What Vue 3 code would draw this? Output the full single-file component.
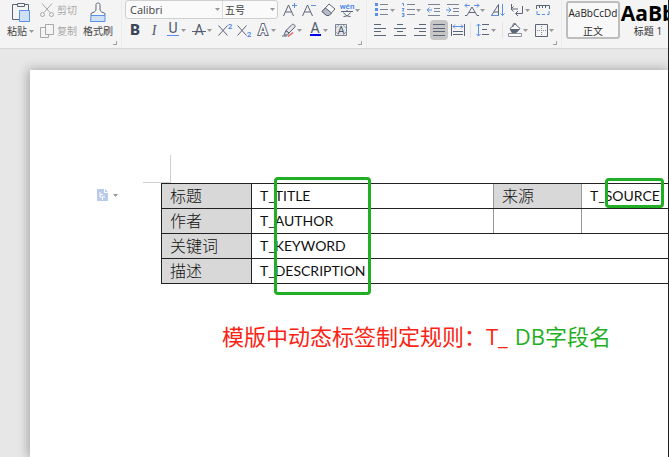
<template>
  <div class="writer">
    <svg class="sprite" aria-hidden="true">
      <symbol id="paste" viewBox="0 0 20 20">
        <path d="M6 2.5H1.5v15H8M14 2.5h3.5V8" fill="none" stroke="#5b6579" />
        <path d="M6.5 4.5v-3h7v3z" fill="#f4f4f4" stroke="#5b6579" />
        <path d="M8.5 8.5h10v11h-10z" fill="#cfe0fb" stroke="#5a8fe8" />
      </symbol>
      <symbol id="brush" viewBox="0 0 20 20">
        <path d="M8 7V2.500c0-2 4-2 4 0V7c0 2 1 3 3 3.500l2 1v2H3v-2l2-1C7 10 8 9 8 7z" fill="#f8f8f8" stroke="#5b6579" />
        <path d="M3 13.5h14v6H2.5z" fill="#cfe0fb" stroke="#5a8fe8" />
      </symbol>
      <symbol id="cut" viewBox="0 0 16 16">
        <g fill="none" stroke="#a8a8a8">
          <path d="M3 1.5l8 9M13 1.5l-8 9" />
          <circle cx="3.5" cy="12.5" r="2" />
          <circle cx="12.5" cy="12.5" r="2" />
        </g>
      </symbol>
      <symbol id="copy" viewBox="0 0 16 16">
        <path d="M6.5 1.5h8v10h-8zM6.5 4.5h-5v10h8v-3" fill="none" stroke="#a8a8a8" />
      </symbol>
      <symbol id="grow" viewBox="0 0 16 16">
        <path d="M1.5 14L6.5 3l5 11M3.5 10h6" fill="none" stroke="#5b6579" />
        <path d="M10 3.5h5M12.5 1v5" stroke="#5a8fe8" />
      </symbol>
      <symbol id="shrink" viewBox="0 0 16 16">
        <path d="M1.5 14L6.5 3l5 11M3.5 10h6" fill="none" stroke="#5b6579" />
        <path d="M10 3.5h5" stroke="#5a8fe8" />
      </symbol>
      <symbol id="eraser" viewBox="0 0 16 16">
        <path d="M9 2l6 5-6 6.500H6.500L2 9.500z" fill="#f8f8f8" stroke="#5b6579" />
        <path d="M5.500 6l6 5L9 13.500H6.500L2 9.500z" fill="#b5bac4" stroke="#5b6579" />
      </symbol>
      <symbol id="pinyin" viewBox="0 0 16 16">
        <path d="M2 9.5h12M8 8v1.500M4.500 10.500c2 3 4 4 7 4M11.500 10.500c-2 3-4 4-7 4" fill="none" stroke="#5b6579" />
      </symbol>
      <symbol id="underline" viewBox="0 0 16 16">
        <path d="M2 13.5h12" stroke="#5a8fe8" />
      </symbol>
      <symbol id="strike" viewBox="0 0 16 16">
        <path d="M1 9.5h14" stroke="#5b6579" />
      </symbol>
      <symbol id="cross" viewBox="0 0 16 16">
        <path d="M1.5 3.5l9 10M10.5 3.5l-9 10" stroke="#5b6579" />
      </symbol>
      <symbol id="marker" viewBox="0 0 16 16">
        <path d="M5 8.500l6-6c1-1 4 1 3 2.500l-6 6zM5 8.500l3 2.500-1.500 2H3z" fill="#e2e4e8" stroke="#5b6579" />
        <path d="M1 14h5" stroke="#5b6579" />
        <path d="M7 14.500l5-4" stroke="#e8604c" stroke-width="1.5" />
      </symbol>
      <symbol id="color" viewBox="0 0 16 16">
        <path d="M3 12h11v2H3z" fill="#0000f0" />
      </symbol>
      <symbol id="shade" viewBox="0 0 16 16">
        <path d="M2.5 2.5h11v11h-11z" fill="#e4e6ea" stroke="#7b8494" />
        <path d="M3 6l3-3M10 3l3 3M3 10l3 3M13 10l-3 3" stroke="#a4abb6" />
      </symbol>
      <symbol id="bullets" viewBox="0 0 16 16">
        <path d="M6 2.5h8M6 7.5h8M6 12.5h8" stroke="#7b8494" />
        <path d="M1 1h3v3H1zM1 6h3v3H1zM1 11h3v3H1z" fill="#5a8fe8" />
      </symbol>
      <symbol id="numbers" viewBox="0 0 16 16">
        <path d="M7 2.5h8M7 7.5h8M7 12.5h8" stroke="#7b8494" />
        <path d="M2 1.500h1.500V4M2 6.500h2L2.500 9H4M2 11.500h2v3H2M2.500 13H4" fill="none" stroke="#5a8fe8" />
      </symbol>
      <symbol id="outdent" viewBox="0 0 16 16">
        <path d="M2 2.5h12M8 6.5h6M8 9.5h6M2 13.5h12" stroke="#7b8494" />
        <path d="M6 8H1M3.500 5.500L1 8l2.500 2.500" fill="none" stroke="#5a8fe8" />
      </symbol>
      <symbol id="indent" viewBox="0 0 16 16">
        <path d="M2 2.5h12M8 6.5h6M8 9.5h6M2 13.5h12" stroke="#7b8494" />
        <path d="M1 8h5M3.500 5.500L6 8l-2.500 2.500" fill="none" stroke="#5a8fe8" />
      </symbol>
      <symbol id="textdir" viewBox="0 0 16 16">
        <path d="M1 13.500h2L8 5l5 8.500h2M5 10.500h6" fill="none" stroke="#5b6579" />
        <path d="M6 3.500H1M3 1.500l-2 2 2 2M10 3.500h5M13 1.500l2 2-2 2" fill="none" stroke="#5a8fe8" />
      </symbol>
      <symbol id="sort" viewBox="0 0 16 16">
        <path d="M1.500 13.500L8.500 2.500v11zM4 10h4" fill="none" stroke="#5b6579" />
        <path d="M2 13.500h7M12.500 2v11.500M10.500 11.500l2 2 2-2" fill="none" stroke="#5a8fe8" />
      </symbol>
      <symbol id="enter" viewBox="0 0 16 16">
        <path d="M2.500 2v5H9M4.500 4.500L2 7l2.500 2.500M13.500 4v7.500H7M9 9l-2.500 2.500L9 14" fill="none" stroke="#5b6579" />
      </symbol>
      <symbol id="tabs" viewBox="0 0 16 16">
        <path d="M1.500 7V3.500h13V7M4.500 4v2M7.500 4v2M10.500 4v2" fill="none" stroke="#5b6579" />
        <path d="M2 9v3.500h3M7 12.500h3M14 9v3.500h-2" fill="none" stroke="#5a8fe8" />
      </symbol>
      <symbol id="left" viewBox="0 0 16 16">
        <path d="M0 2.5h7M0 6.5h12M0 9.5h7M0 13.5h12" stroke="#5b6579" />
      </symbol>
      <symbol id="center" viewBox="0 0 16 16">
        <path d="M4 2.5h6M1 6.5h12M4 9.5h6M1 13.5h12" stroke="#5b6579" />
      </symbol>
      <symbol id="right" viewBox="0 0 16 16">
        <path d="M7 2.5h7M2 6.5h12M7 9.5h7M2 13.5h12" stroke="#5b6579" />
      </symbol>
      <symbol id="justify" viewBox="0 0 16 16">
        <path d="M2 2.5h12M2 6.5h12M2 9.5h12M2 13.5h12" stroke="#5b6579" />
      </symbol>
      <symbol id="distribute" viewBox="0 0 16 16">
        <path d="M1.5 2v12M14.5 2v12M3 9.5h10M3 12.5h10" stroke="#5b6579" />
        <path d="M3 4.500h10M5 2.500l-2 2 2 2M11 2.500l2 2-2 2" fill="none" stroke="#5a8fe8" />
      </symbol>
      <symbol id="spacing" viewBox="0 0 16 16">
        <path d="M7 2.5h7M7 7.5h5M7 12.5h7" stroke="#5b6579" />
        <path d="M3.500 2v12M1.500 4l2-2 2 2M1.500 12l2 2 2-2" fill="none" stroke="#5a8fe8" />
      </symbol>
      <symbol id="bucket" viewBox="0 0 16 16">
        <path d="M3 6.500l5-4.500 5 4.500-4 4H5zM6 5V2.500c0-1.500 3-1.500 3 0" fill="#f8f8f8" stroke="#5b6579" />
        <path d="M3 7h10l-4 4H5z" fill="#5b6579" />
        <path d="M1.5 11.5h13v3h-13z" fill="#fff" stroke="#8a8f99" />
      </symbol>
      <symbol id="borders" viewBox="0 0 16 16">
        <path d="M2.5 2.5h12v12h-12z" fill="none" stroke="#5b6579" />
        <path d="M8.5 4v10M4 8.5h10" stroke="#8a8f99" stroke-dasharray="1 1" />
      </symbol>
      <symbol id="caret" viewBox="0 0 5 3">
        <path d="M0 0h5L2.5 3z" fill="#999" />
      </symbol>
      <symbol id="file" viewBox="0 0 12 12">
        <path d="M0 0h8l3 3v9H0z" fill="#b9cbea" />
        <path d="M7.500 0v3.500H11M3 3v5h5M3 5.500h3M5.500 8v3" fill="none" stroke="#fff" />
      </symbol>
    </svg>

    <header class="ribbon">
      <section class="group clipboard" aria-label="剪贴板">
        <button class="big">
          <svg><use href="#paste" /></svg>
          <span>粘贴<svg class="caret"><use href="#caret" /></svg></span>
        </button>
        <div class="stack">
          <button class="inline" disabled><svg><use href="#cut" /></svg>剪切</button>
          <button class="inline" disabled><svg><use href="#copy" /></svg>复制</button>
        </div>
        <button class="big">
          <svg><use href="#brush" /></svg>
          <span>格式刷</span>
        </button>
        <i class="corner"></i>
      </section>

      <section class="group font" aria-label="字体">
        <div class="row">
          <div class="combo">
            <label class="family">
              <select aria-label="字体名称"><option>Calibri</option></select>
              <svg class="caret"><use href="#caret" /></svg>
            </label>
            <label class="size">
              <select aria-label="字号"><option>五号</option></select>
              <svg class="caret"><use href="#caret" /></svg>
            </label>
          </div>
          <button v-for="t in fontTop" :key="t.label" class="tool" :class="{ menu: t.menu }" :aria-label="t.label">
            <svg viewBox="0 0 16 16">
              <use :href="'#' + t.icon" />
              <text v-if="t.text" :x="t.x" :y="t.y" class="glyph" :class="t.kind">{{ t.text }}</text>
            </svg>
            <svg v-if="t.menu" class="caret"><use href="#caret" /></svg>
          </button>
        </div>
        <div class="row">
          <button v-for="t in fontBottom" :key="t.label" class="tool" :class="{ menu: t.menu }" :aria-label="t.label">
            <svg viewBox="0 0 16 16">
              <use v-if="t.icon" :href="'#' + t.icon" />
              <text v-if="t.text" :x="t.x" :y="t.y" class="glyph" :class="t.kind">{{ t.text }}</text>
            </svg>
            <svg v-if="t.menu" class="caret"><use href="#caret" /></svg>
          </button>
        </div>
        <i class="corner"></i>
      </section>

      <section class="group paragraph" aria-label="段落">
        <div class="row">
          <button v-for="t in paraTop" :key="t.icon" class="tool" :class="{ menu: t.menu }" :aria-label="t.label">
            <svg><use :href="'#' + t.icon" /></svg>
            <svg v-if="t.menu" class="caret"><use href="#caret" /></svg>
          </button>
        </div>
        <div class="row">
          <template v-for="t in paraBottom" :key="t.icon">
            <i v-if="t.split" class="split"></i>
            <button class="tool" :class="{ menu: t.menu, active: t.active }" :aria-label="t.label">
              <svg><use :href="'#' + t.icon" /></svg>
              <svg v-if="t.menu" class="caret"><use href="#caret" /></svg>
            </button>
          </template>
        </div>
        <i class="corner"></i>
      </section>

      <section class="group styles" aria-label="样式">
        <button class="style selected">
          <span class="sample">AaBbCcDd</span>
          <span>正文</span>
        </button>
        <button class="style">
          <span class="sample heading">AaBb</span>
          <span>标题 1</span>
        </button>
      </section>
    </header>

    <main class="workspace">
      <article class="page">
        <div class="body">
          <button class="paste-options" aria-label="粘贴选项">
            <svg><use href="#file" /></svg>
            <svg class="caret"><use href="#caret" /></svg>
          </button>
          <div class="sheet">
            <i class="crop-mark"></i>
            <table>
              <colgroup>
                <col class="c1" />
                <col class="c2" />
                <col class="c3" />
                <col />
              </colgroup>
              <tbody>
                <tr>
                  <th>标题</th>
                  <td>T_TITLE</td>
                  <th class="soft">来源</th>
                  <td class="soft">T_SOURCE</td>
                </tr>
                <tr class="light">
                  <th>作者</th>
                  <td>T_AUTHOR</td>
                  <td class="soft"></td>
                  <td class="soft"></td>
                </tr>
                <tr>
                  <th>关键词</th>
                  <td colspan="3">T_KEYWORD</td>
                </tr>
                <tr class="light">
                  <th>描述</th>
                  <td colspan="3">T_DESCRIPTION</td>
                </tr>
              </tbody>
            </table>
            <i class="frame fields"></i>
            <i class="frame source"></i>
            <p class="note">
              <span>模版中动态标签制定规则：T_</span>
              <span class="db">DB字段名</span>
            </p>
          </div>
        </div>
      </article>
    </main>
  </div>
</template>

<script setup>
const fontTop = [
  { icon: 'grow', label: '增大字号' },
  { icon: 'shrink', label: '减小字号' },
  { icon: 'eraser', label: '清除格式' },
  { icon: 'pinyin', label: '拼音指南', menu: true, text: 'wén', x: 8, y: 7, kind: 'tiny' },
]

const fontBottom = [
  { label: '加粗', text: 'B', x: 8, y: 13, kind: 'heavy' },
  { label: '倾斜', text: 'I', x: 8, y: 13, kind: 'slant' },
  { icon: 'underline', label: '下划线', menu: true, text: 'U', x: 8, y: 11 },
  { icon: 'strike', label: '删除线', menu: true, text: 'A', x: 8, y: 13 },
  { icon: 'cross', label: '上标', text: '2', x: 13, y: 7, kind: 'tiny' },
  { icon: 'cross', label: '下标', text: '2', x: 13, y: 15, kind: 'tiny' },
  { label: '文字效果', menu: true, text: 'A', x: 8, y: 13, kind: 'hollow' },
  { icon: 'marker', label: '突出显示', menu: true },
  { icon: 'color', label: '字体颜色', menu: true, text: 'A', x: 8, y: 11 },
  { icon: 'shade', label: '字符底纹', text: 'A', x: 8, y: 12, kind: 'small' },
]

const paraTop = [
  { icon: 'bullets', label: '项目符号', menu: true },
  { icon: 'numbers', label: '编号', menu: true },
  { icon: 'outdent', label: '减少缩进量' },
  { icon: 'indent', label: '增加缩进量' },
  { icon: 'textdir', label: '中文版式', menu: true },
  { icon: 'sort', label: '排序' },
  { icon: 'enter', label: '显示段落标记', menu: true },
  { icon: 'tabs', label: '制表位' },
]

const paraBottom = [
  { icon: 'left', label: '左对齐' },
  { icon: 'center', label: '居中' },
  { icon: 'right', label: '右对齐' },
  { icon: 'justify', label: '两端对齐', active: true },
  { icon: 'distribute', label: '分散对齐' },
  { icon: 'spacing', label: '行距', menu: true, split: true },
  { icon: 'bucket', label: '底纹颜色', menu: true, split: true },
  { icon: 'borders', label: '边框', menu: true },
]
</script>

<style>
body {
  background: #e7e7e7;
}
</style>

<style scoped>
.writer {
  display: flex;
  flex-direction: column;
  min-height: 100vh;
  box-sizing: border-box;
  border-right: 1px solid #222;
  overflow: hidden;
  font-family: 'Open Sans', 'Noto Sans CJK SC', sans-serif;
  font-size: 10px;
  color: #444;
}

.sprite {
  position: absolute;
  width: 0;
  height: 0;
}

.glyph {
  font-family: Roboto, sans-serif;
  font-size: 14px;
  text-anchor: middle;
  fill: #4f596c;
}

.heavy {
  font-size: 15px;
  font-weight: 900;
  fill: #3c4558;
}

.slant {
  font-style: italic;
  font-family: 'Liberation Serif', serif;
}

.small {
  font-size: 11px;
}

.tiny {
  font-size: 8px;
  font-weight: 500;
  fill: #3f7fe8;
}

.hollow {
  font-weight: 500;
  fill: #fff;
  stroke: #5b6579;
  stroke-width: 2px;
  paint-order: stroke;
}

button {
  padding: 0;
  border: 0;
  background: none;
  font: inherit;
  color: inherit;
}

svg {
  display: block;
  flex: none;
  width: 16px;
  height: 16px;
  overflow: visible;
}

.caret {
  width: 5px;
  height: 3px;
}

.ribbon {
  display: flex;
  height: 48px;
  flex: none;
  background: #f4f4f4;
  border-bottom: 1px solid #d6d6d6;
}

.group {
  position: relative;
  flex: none;
  box-sizing: border-box;
  border-right: 1px solid #ececec;
}

.corner {
  position: absolute;
  right: 4px;
  bottom: 3px;
  width: 3px;
  height: 3px;
  border: solid #a0a0a0;
  border-width: 0 1px 1px 0;
}

.clipboard {
  display: flex;
  align-items: flex-start;
  width: 122px;
  padding: 2px 8px 0 7px;
}

.big {
  display: flex;
  flex-direction: column;
  align-items: center;
  gap: 2px;
  line-height: 14px;
}

.big > svg {
  width: 20px;
  height: 20px;
}

.big span {
  display: flex;
  align-items: center;
  gap: 2px;
}

.stack {
  display: flex;
  flex-direction: column;
  gap: 5px;
  margin: 0 6px 0 5px;
}

.inline {
  display: flex;
  align-items: center;
  gap: 2px;
  line-height: 16px;
  color: #a8a8a8;
}

.font {
  width: 245px;
  padding-left: 3px;
}

.row {
  display: flex;
  align-items: center;
  gap: 3px;
  height: 20px;
}

.font .row + .row {
  padding-left: 2px;
}

.combo {
  display: flex;
  align-self: flex-start;
  box-sizing: border-box;
  width: 153px;
  height: 19px;
  margin-right: 1px;
  border: 1px solid #cfcfcf;
  border-radius: 3px;
  background: #fafafa;
}

.combo label {
  display: flex;
  align-items: center;
  padding: 0 2px 0 4px;
}

.family {
  flex: 1;
  font-size: 11px;
}

.size {
  width: 50px;
  border-left: 1px solid #dcdcdc;
}

.combo .size {
  padding-left: 2px;
}

select {
  flex: 1;
  min-width: 0;
  padding: 0;
  border: 0;
  appearance: none;
  background: none;
  font: inherit;
  color: inherit;
}

.tool {
  display: flex;
  align-items: center;
  width: 16px;
  height: 18px;
}

.menu {
  width: 23px;
}

.active {
  border-radius: 3px;
  background: #c6c6c6;
  box-shadow: 0 0 0 1px #c6c6c6;
}

.paragraph {
  width: 195px;
  padding-left: 7px;
}

.split {
  width: 1px;
  height: 16px;
  margin: 0 1px;
  background: #e2e2e2;
}

.styles {
  display: flex;
  flex: 1;
  min-width: 0;
  gap: 1px;
  padding: 1px 0 0 4px;
  overflow: hidden;
  border-right: 0;
}

.style {
  display: flex;
  flex: none;
  flex-direction: column;
  align-items: center;
  box-sizing: border-box;
  width: 54px;
  height: 38px;
  border: 2px solid transparent;
  line-height: 12px;
  color: #333;
  white-space: nowrap;
}

.selected {
  border-color: #bdbdbd;
  border-radius: 3px;
  background: #f8f8f8;
}

.sample {
  height: 22px;
  line-height: 20px;
  color: #222;
}

.heading {
  font-size: 21px;
  font-weight: 700;
  color: #000;
}

.workspace {
  display: flex;
  flex: 1;
  padding: 21px 0 0 30px;
  background: #e7e7e7;
}

.page {
  flex: 1;
  min-width: 0;
  padding: 113px 0 0 67px;
  background: #fff;
  box-shadow: -1px 0 10px 1px rgba(0, 0, 0, 0.28);
}

.body {
  display: flex;
  align-items: flex-start;
}

.paste-options {
  display: flex;
  align-items: center;
  gap: 4px;
  flex: none;
  width: 64px;
  height: 24px;
}

.paste-options svg:first-child {
  width: 12px;
  height: 12px;
}

.sheet {
  position: relative;
  flex: 1;
  min-width: 0;
}

.crop-mark {
  position: absolute;
  top: -28px;
  left: -18px;
  width: 27px;
  height: 27px;
  border: solid #cfcfcf;
  border-width: 0 1px 1px 0;
}

table {
  position: relative;
  width: 100%;
  table-layout: fixed;
  border-collapse: collapse;
  font-family: Lato, 'Noto Sans CJK SC', sans-serif;
  font-size: 14px;
  line-height: 24px;
  color: #111;
}

.c1 {
  width: 90px;
}

.c2 {
  width: 242px;
}

.c3 {
  width: 88px;
}

th,
td {
  height: 24px;
  padding: 0 0 0 8px;
  border: 1px solid #222;
  border-right: 0;
  text-align: left;
}

th {
  background: #d8d8d8;
  font-size: 16px;
  font-weight: 300;
}

.light th,
.light td {
  border-top-color: #999;
}

.soft {
  border-left-color: #999;
}

.frame {
  position: absolute;
  box-sizing: border-box;
  border: 3px solid #1fae24;
  border-radius: 4px;
}

.fields {
  top: -6px;
  left: 113px;
  width: 97px;
  height: 118px;
}

.source {
  top: -5px;
  left: 444px;
  width: 59px;
  height: 30px;
}

.note {
  display: flex;
  gap: 7px;
  margin: 35px 0 0 61px;
  font-size: 22px;
  line-height: 34px;
  color: #fb2313;
  white-space: nowrap;
}

.db {
  color: #1fae24;
}
</style>
